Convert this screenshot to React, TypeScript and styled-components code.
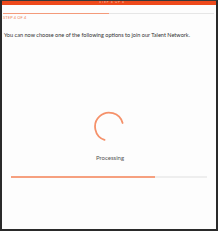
import styled, { createGlobalStyle } from "styled-components"

const Global = createGlobalStyle`
	html, body {
		margin: 0;
		padding: 0;
		background: #ffffff;
	}
	* {
		box-sizing: border-box;
	}
`

export default function App() {
	return (
		<>
			<Global />
			<Frame>
				<Header>
					<HeaderText>STEP 4 OF 4</HeaderText>
				</Header>
				<StepTrack $fill={50}>
					<Fill $percent={50} $color="#f49a7a" />
				</StepTrack>
				<StepLabel>STEP 4 OF 4</StepLabel>
				<Intro>You can now choose one of the following options to join our Talent Network.</Intro>
				<Loader>
					<Spinner />
					<Status>Processing</Status>
				</Loader>
				<LoadTrack>
					<Fill $percent={73.5} $color="#f6a07f" />
				</LoadTrack>
			</Frame>
		</>
	)
}

const Spinner = () => (
	<SpinnerSvg width="32" height="32" viewBox="0 0 32 32">
		<path
			d="M 28.6 12 A 14 14 0 1 0 10.5 28.9"
			fill="none"
			stroke="#f5916a"
			strokeWidth="1.8"
			strokeLinecap="round"
		/>
	</SpinnerSvg>
)

//style

const Frame = styled.div`
	display: flex;
	flex-direction: column;
	width: 218px;
	height: 231px;
	border: 2px solid #2a2a2a;
	border-top: 1px solid #3a3a3a;
	background: #fdfdfd;
	font-family: Lato, "Open Sans", sans-serif;
	overflow: hidden;
`

const Header = styled.div`
	height: 4px;
	margin: 0 -2px;
	background: #ee4a1c;
	display: flex;
	justify-content: center;
	align-items: flex-start;
`

const HeaderText = styled.span`
	font-size: 3px;
	line-height: 3px;
	color: #f6c8b6;
	letter-spacing: 0.8px;
	margin-left: 6px;
`

const StepTrack = styled.div<{ $fill?: number }>`
	display: flex;
	height: 1px;
	margin: 8px 2px 0 1px;
	background: #e6e6e6;
`

const LoadTrack = styled.div`
	display: flex;
	width: 196px;
	height: 2px;
	margin: 14px 0 0 9px;
	background: #eeeeee;
`

const Fill = styled.div<{ $percent: number; $color: string }>`
	width: ${(p) => p.$percent}%;
	height: 100%;
	background: ${(p) => p.$color};
`

const StepLabel = styled.div`
	margin-top: 1px;
	padding-left: 1px;
	font-size: 4px;
	line-height: 5px;
	color: #f08558;
	letter-spacing: 0.1px;
`

const Intro = styled.p`
	margin: 11px 0 0 2px;
	font-size: 5.55px;
	line-height: 8px;
	color: #333333;
	white-space: nowrap;
`

const Loader = styled.div`
	display: flex;
	flex-direction: column;
	align-items: center;
	margin-top: 72px;
	padding-left: 2px;
`

const SpinnerSvg = styled.svg`
	display: block;
`

const Status = styled.div`
	margin-top: 11px;
	font-size: 6px;
	line-height: 8px;
	color: #555555;
`
